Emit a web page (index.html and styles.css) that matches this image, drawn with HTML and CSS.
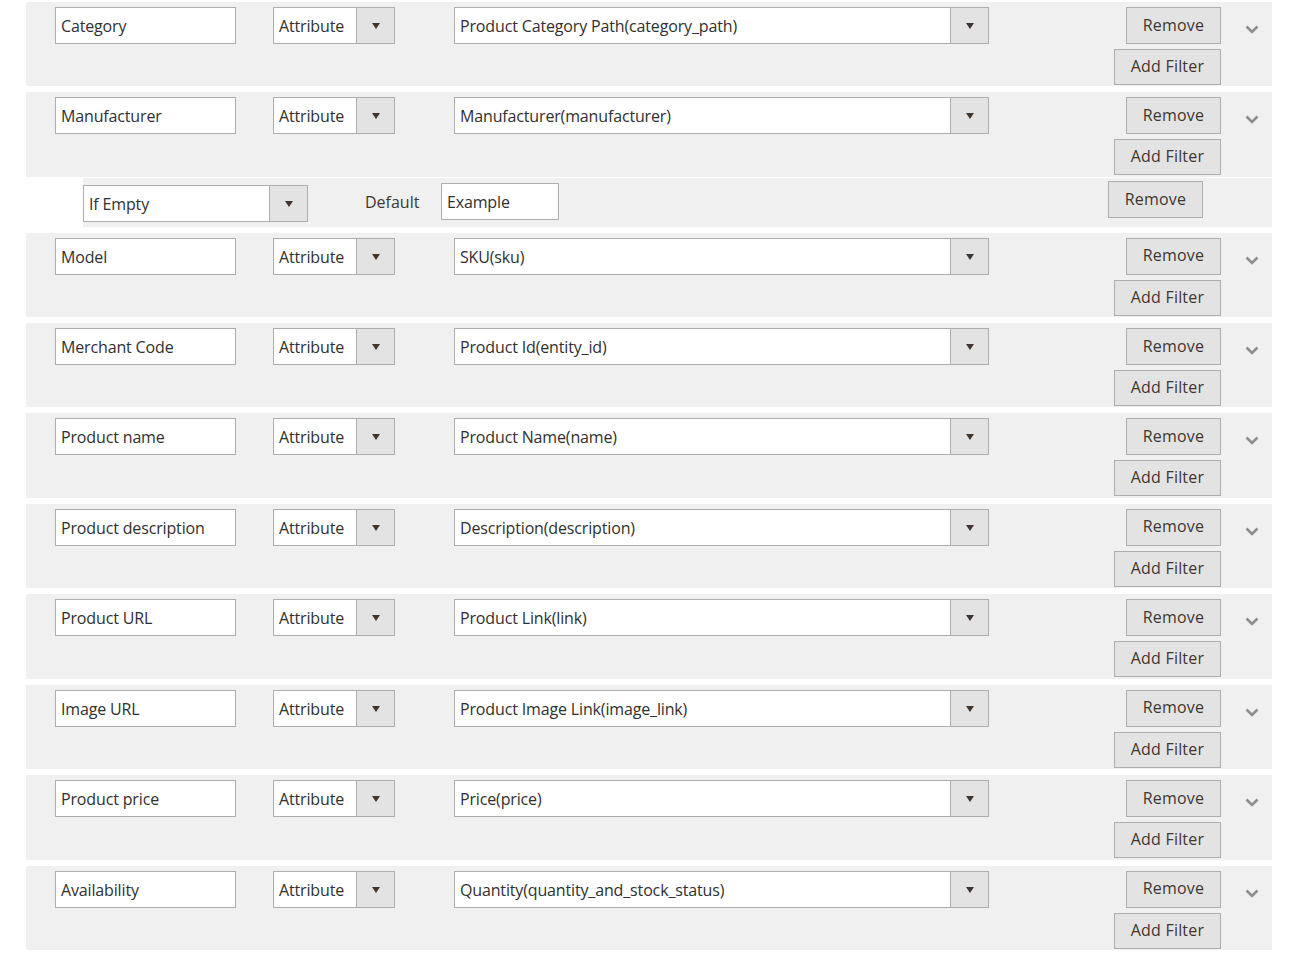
FILE: index.html
```html
<!DOCTYPE html>
<html lang="en">
<head>
<meta charset="utf-8">
<title>Feed attributes</title>
<link rel="stylesheet" href="styles.css">
</head>
<body>
<div class="list">

  <div class="row">
    <div class="field name">Category</div>
    <div class="select attr"><span class="sel-text">Attribute</span><span class="sel-btn"><i class="tri"></i></span></div>
    <div class="select value"><span class="sel-text">Product Category Path(category_path)</span><span class="sel-btn"><i class="tri"></i></span></div>
    <div class="actions"><span class="btn remove">Remove</span><span class="btn add">Add Filter</span></div>
    <div class="toggle"><svg width="14" height="9" viewBox="0 0 14 9"><polyline points="1.5,1.5 7,7 12.5,1.5" fill="none" stroke="#8d8d8d" stroke-width="2.6"/></svg></div>
  </div>

  <div class="row row-tight">
    <div class="field name">Manufacturer</div>
    <div class="select attr"><span class="sel-text">Attribute</span><span class="sel-btn"><i class="tri"></i></span></div>
    <div class="select value"><span class="sel-text">Manufacturer(manufacturer)</span><span class="sel-btn"><i class="tri"></i></span></div>
    <div class="actions"><span class="btn remove">Remove</span><span class="btn add">Add Filter</span></div>
    <div class="toggle"><svg width="14" height="9" viewBox="0 0 14 9"><polyline points="1.5,1.5 7,7 12.5,1.5" fill="none" stroke="#8d8d8d" stroke-width="2.6"/></svg></div>
  </div>

  <div class="subrow">
    <div class="sub-gap"></div>
    <div class="select cond"><span class="sel-text">If Empty</span><span class="sel-btn"><i class="tri"></i></span></div>
    <div class="sub-label">Default</div>
    <div class="field example">Example</div>
    <span class="btn sub-remove">Remove</span>
  </div>

  <div class="row">
    <div class="field name">Model</div>
    <div class="select attr"><span class="sel-text">Attribute</span><span class="sel-btn"><i class="tri"></i></span></div>
    <div class="select value"><span class="sel-text">SKU(sku)</span><span class="sel-btn"><i class="tri"></i></span></div>
    <div class="actions"><span class="btn remove">Remove</span><span class="btn add">Add Filter</span></div>
    <div class="toggle"><svg width="14" height="9" viewBox="0 0 14 9"><polyline points="1.5,1.5 7,7 12.5,1.5" fill="none" stroke="#8d8d8d" stroke-width="2.6"/></svg></div>
  </div>

  <div class="row">
    <div class="field name">Merchant Code</div>
    <div class="select attr"><span class="sel-text">Attribute</span><span class="sel-btn"><i class="tri"></i></span></div>
    <div class="select value"><span class="sel-text">Product Id(entity_id)</span><span class="sel-btn"><i class="tri"></i></span></div>
    <div class="actions"><span class="btn remove">Remove</span><span class="btn add">Add Filter</span></div>
    <div class="toggle"><svg width="14" height="9" viewBox="0 0 14 9"><polyline points="1.5,1.5 7,7 12.5,1.5" fill="none" stroke="#8d8d8d" stroke-width="2.6"/></svg></div>
  </div>

  <div class="row">
    <div class="field name">Product name</div>
    <div class="select attr"><span class="sel-text">Attribute</span><span class="sel-btn"><i class="tri"></i></span></div>
    <div class="select value"><span class="sel-text">Product Name(name)</span><span class="sel-btn"><i class="tri"></i></span></div>
    <div class="actions"><span class="btn remove">Remove</span><span class="btn add">Add Filter</span></div>
    <div class="toggle"><svg width="14" height="9" viewBox="0 0 14 9"><polyline points="1.5,1.5 7,7 12.5,1.5" fill="none" stroke="#8d8d8d" stroke-width="2.6"/></svg></div>
  </div>

  <div class="row">
    <div class="field name">Product description</div>
    <div class="select attr"><span class="sel-text">Attribute</span><span class="sel-btn"><i class="tri"></i></span></div>
    <div class="select value"><span class="sel-text">Description(description)</span><span class="sel-btn"><i class="tri"></i></span></div>
    <div class="actions"><span class="btn remove">Remove</span><span class="btn add">Add Filter</span></div>
    <div class="toggle"><svg width="14" height="9" viewBox="0 0 14 9"><polyline points="1.5,1.5 7,7 12.5,1.5" fill="none" stroke="#8d8d8d" stroke-width="2.6"/></svg></div>
  </div>

  <div class="row">
    <div class="field name">Product URL</div>
    <div class="select attr"><span class="sel-text">Attribute</span><span class="sel-btn"><i class="tri"></i></span></div>
    <div class="select value"><span class="sel-text">Product Link(link)</span><span class="sel-btn"><i class="tri"></i></span></div>
    <div class="actions"><span class="btn remove">Remove</span><span class="btn add">Add Filter</span></div>
    <div class="toggle"><svg width="14" height="9" viewBox="0 0 14 9"><polyline points="1.5,1.5 7,7 12.5,1.5" fill="none" stroke="#8d8d8d" stroke-width="2.6"/></svg></div>
  </div>

  <div class="row">
    <div class="field name">Image URL</div>
    <div class="select attr"><span class="sel-text">Attribute</span><span class="sel-btn"><i class="tri"></i></span></div>
    <div class="select value"><span class="sel-text">Product Image Link(image_link)</span><span class="sel-btn"><i class="tri"></i></span></div>
    <div class="actions"><span class="btn remove">Remove</span><span class="btn add">Add Filter</span></div>
    <div class="toggle"><svg width="14" height="9" viewBox="0 0 14 9"><polyline points="1.5,1.5 7,7 12.5,1.5" fill="none" stroke="#8d8d8d" stroke-width="2.6"/></svg></div>
  </div>

  <div class="row">
    <div class="field name">Product price</div>
    <div class="select attr"><span class="sel-text">Attribute</span><span class="sel-btn"><i class="tri"></i></span></div>
    <div class="select value"><span class="sel-text">Price(price)</span><span class="sel-btn"><i class="tri"></i></span></div>
    <div class="actions"><span class="btn remove">Remove</span><span class="btn add">Add Filter</span></div>
    <div class="toggle"><svg width="14" height="9" viewBox="0 0 14 9"><polyline points="1.5,1.5 7,7 12.5,1.5" fill="none" stroke="#8d8d8d" stroke-width="2.6"/></svg></div>
  </div>

  <div class="row">
    <div class="field name">Availability</div>
    <div class="select attr"><span class="sel-text">Attribute</span><span class="sel-btn"><i class="tri"></i></span></div>
    <div class="select value"><span class="sel-text">Quantity(quantity_and_stock_status)</span><span class="sel-btn"><i class="tri"></i></span></div>
    <div class="actions"><span class="btn remove">Remove</span><span class="btn add">Add Filter</span></div>
    <div class="toggle"><svg width="14" height="9" viewBox="0 0 14 9"><polyline points="1.5,1.5 7,7 12.5,1.5" fill="none" stroke="#8d8d8d" stroke-width="2.6"/></svg></div>
  </div>

</div>
</body>
</html>
```

FILE: styles.css
```css
html, body {
  margin: 0;
  padding: 0;
  background: #ffffff;
}

body {
  font-family: "Open Sans", "Liberation Sans", sans-serif;
  font-size: 16px;
  color: #303030;
}

.list {
  width: 1246px;
  margin-left: 26px;
  padding-top: 2px;
}

.row {
  box-sizing: border-box;
  height: 84.43px;
  margin-bottom: 6px;
  padding: 5px 0 0 29px;
  background: #f0f0f0;
  display: flex;
  align-items: flex-start;
}

.row-tight {
  margin-bottom: 1.4px;
}

.field,
.select {
  box-sizing: border-box;
  height: 37px;
  border: 1px solid #adadad;
  background: #ffffff;
  display: flex;
  align-items: center;
  white-space: nowrap;
  letter-spacing: -0.15px;
}

.field {
  padding-left: 5px;
  padding-top: 1px;
}

.name {
  width: 181px;
  margin-right: 37px;
}

.select {
  padding: 0;
}

.sel-text {
  flex: 1;
  padding-left: 5px;
  padding-top: 1px;
  overflow: hidden;
}

.sel-btn {
  width: 37px;
  height: 100%;
  border-left: 1px solid #adadad;
  background: #e3e3e3;
  display: flex;
  align-items: center;
  justify-content: center;
}

.tri {
  display: block;
  width: 0;
  height: 0;
  border-left: 4.5px solid transparent;
  border-right: 4.5px solid transparent;
  border-top: 6px solid #41362f;
  margin-top: 1px;
}

.attr {
  width: 122px;
  margin-right: 59px;
}

.value {
  width: 535px;
}

.actions {
  margin-left: auto;
  display: flex;
  flex-direction: column;
  align-items: flex-end;
  gap: 5px;
}

.btn {
  box-sizing: border-box;
  height: 37px;
  padding-bottom: 2px;
  border: 1px solid #adadad;
  background: #e3e3e3;
  color: #41362f;
  letter-spacing: 0.2px;
  display: flex;
  align-items: center;
  justify-content: center;
  white-space: nowrap;
}

.remove {
  width: 95px;
}

.add {
  width: 107px;
  height: 36px;
}

.toggle {
  width: 51px;
  height: 37px;
  display: flex;
  align-items: center;
  padding-left: 24px;
  box-sizing: border-box;
  padding-top: 8px;
}

.toggle svg {
  display: block;
}

.subrow {
  box-sizing: border-box;
  height: 48.4px;
  margin-bottom: 6px;
  background: #f0f0f0;
  display: flex;
  align-items: flex-start;
}

.sub-gap {
  width: 57px;
  height: 100%;
  background: #ffffff;
}

.cond {
  width: 225px;
  margin-top: 7px;
}

.sub-label {
  margin-left: 57px;
  margin-top: 13px;
  color: #41362f;
  width: 76px;
}

.example {
  width: 118px;
  margin-top: 5px;
}

.sub-remove {
  width: 95px;
  margin-top: 3px;
  margin-left: auto;
  margin-right: 69px;
}
```
